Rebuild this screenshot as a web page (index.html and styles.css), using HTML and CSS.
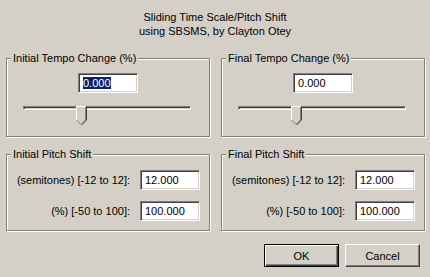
FILE: index.html
```html
<!DOCTYPE html>
<html lang="en">
<head>
  <meta charset="UTF-8"/>
  <title>Sliding Time Scale/Pitch Shift</title>
  <link rel="stylesheet" href="styles.css">
</head>
<body>

<div class="dialog">
  <div class="title">
    <div>Sliding Time Scale/Pitch Shift</div>
    <div>using SBSMS, by Clayton Otey</div>
  </div>

  <div class="row row-top">
    <div class="group tempo">
      <span class="legend">Initial Tempo Change (%)</span>
      <div class="field center"><span class="sel">0.000</span></div>
      <div class="slider">
        <div class="track"></div>
        <svg class="thumb" width="11" height="20" viewBox="0 0 11 20">
          <polygon points="0.5,0.5 10.5,0.5 10.5,14 5.5,19 0.5,14" fill="#d4d0c8"/>
          <polyline points="0.5,14 0.5,0.5 10,0.5" fill="none" stroke="#fff"/>
          <polyline points="10.5,0 10.5,14 5.5,19.2" fill="none" stroke="#404040"/>
          <polyline points="9.5,1 9.5,13.6 5.5,17.8" fill="none" stroke="#808080"/>
          <polyline points="0.5,14 5.2,18.7" fill="none" stroke="#808080"/>
        </svg>
      </div>
    </div>
    <div class="group tempo">
      <span class="legend">Final Tempo Change (%)</span>
      <div class="field center">0.000</div>
      <div class="slider">
        <div class="track"></div>
        <svg class="thumb" width="11" height="20" viewBox="0 0 11 20">
          <polygon points="0.5,0.5 10.5,0.5 10.5,14 5.5,19 0.5,14" fill="#d4d0c8"/>
          <polyline points="0.5,14 0.5,0.5 10,0.5" fill="none" stroke="#fff"/>
          <polyline points="10.5,0 10.5,14 5.5,19.2" fill="none" stroke="#404040"/>
          <polyline points="9.5,1 9.5,13.6 5.5,17.8" fill="none" stroke="#808080"/>
          <polyline points="0.5,14 5.2,18.7" fill="none" stroke="#808080"/>
        </svg>
      </div>
    </div>
  </div>

  <div class="row row-bottom">
    <div class="group pitch">
      <span class="legend">Initial Pitch Shift</span>
      <div class="form">
        <label>(semitones) [-12 to 12]:</label>
        <div class="field">12.000</div>
        <label>(%) [-50 to 100]:</label>
        <div class="field">100.000</div>
      </div>
    </div>
    <div class="group pitch">
      <span class="legend">Final Pitch Shift</span>
      <div class="form">
        <label>(semitones) [-12 to 12]:</label>
        <div class="field">12.000</div>
        <label>(%) [-50 to 100]:</label>
        <div class="field">100.000</div>
      </div>
    </div>
  </div>

  <div class="buttons">
    <button class="btn default">OK</button>
    <button class="btn">Cancel</button>
  </div>
</div>

</body>
</html>
```

FILE: styles.css
```css
body {
  margin: 0;
  background-color: #d4d0c8;
  font-family: 'Liberation Sans', Arial, sans-serif;
  font-size: 11px;
  color: #000;
}

.dialog {
  width: 430px;
  height: 277px;
}

.title {
  text-align: center;
  padding-top: 10px;
  line-height: 14px;
}

.row {
  display: flex;
  gap: 11px;
  padding-left: 6px;
}

.row-top {
  margin-top: 20px;
}

.row-bottom {
  margin-top: 17px;
}

.group {
  position: relative;
  box-sizing: border-box;
  width: 204px;
  border: 1px solid #808080;
  box-shadow: inset 1px 1px 0 #fff, 1px 1px 0 #fff;
}

.legend {
  position: absolute;
  top: -7px;
  left: 4px;
  padding: 0 2px;
  line-height: 13px;
  background-color: #d4d0c8;
}

.tempo {
  height: 79px;
  padding-top: 14px;
}

.pitch {
  height: 77px;
  padding: 15px 9px 0 0;
}

.field {
  box-sizing: border-box;
  width: 60px;
  height: 20px;
  padding: 2px 4px;
  line-height: 15px;
  background-color: #fff;
  border: 1px solid;
  border-color: #808080 #fff #fff #808080;
  box-shadow: inset 1px 1px 0 #404040, inset -1px -1px 0 #d4d0c8;
}

.field.center {
  margin: 0 auto;
}

.sel {
  background-color: #0a246a;
  color: #fff;
}

.slider {
  position: relative;
  width: 168px;
  height: 20px;
  margin: 13px 0 0 16px;
}

.track {
  box-sizing: border-box;
  height: 4px;
  margin-top: 7px;
  border: 1px solid;
  border-color: #808080 #fff #fff #808080;
  box-shadow: inset 1px 1px 0 #404040;
}

.thumb {
  position: absolute;
  top: 0;
  left: 53px;
}

.form {
  display: grid;
  grid-template-columns: 1fr 60px;
  column-gap: 10px;
  row-gap: 11px;
}

.form label {
  justify-self: end;
  align-self: center;
}

.buttons {
  display: flex;
  justify-content: flex-end;
  gap: 6px;
  margin-top: 13px;
  padding-right: 10px;
}

.btn {
  box-sizing: border-box;
  width: 75px;
  height: 23px;
  padding: 0;
  font-family: inherit;
  font-size: 11px;
  color: #000;
  background-color: #d4d0c8;
  border: 1px solid;
  border-color: #fff #404040 #404040 #fff;
  box-shadow: inset -1px -1px 0 #808080;
}

.btn.default {
  border: 1px solid #000;
  box-shadow: inset 1px 1px 0 #fff, inset -1px -1px 0 #404040, inset -2px -2px 0 #808080;
}
```
